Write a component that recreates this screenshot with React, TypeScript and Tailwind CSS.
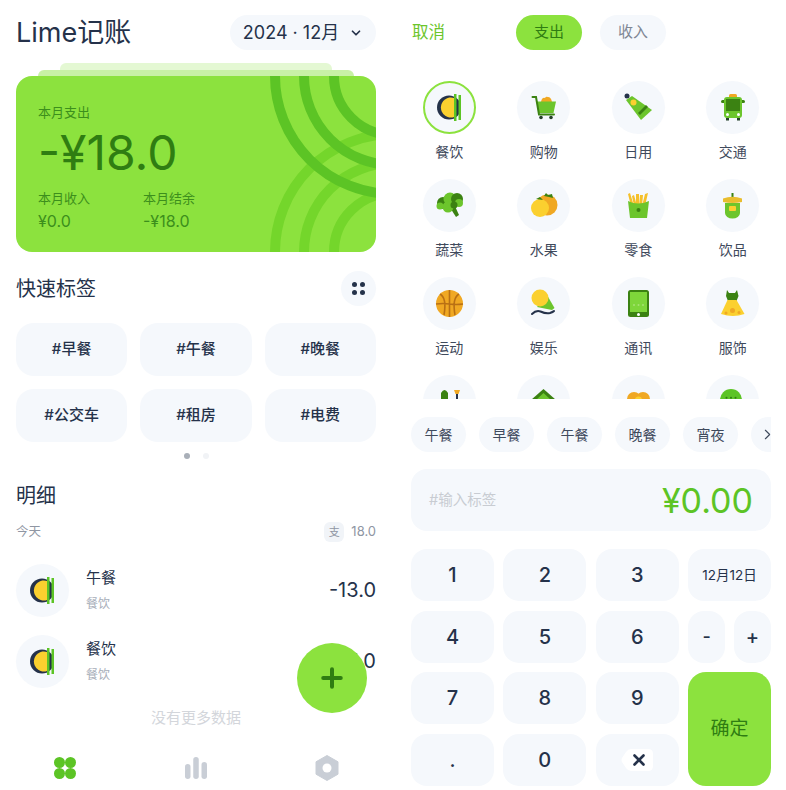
import React from 'react';
import { ChevronDown, ChevronRight, Plus } from 'lucide-react';

const G = '#6cc52c';
const D = '#3b8212';
const Y = '#fbd02f';
const O = '#f0a823';

const Burger = () => (
  <>
    <circle cx="26" cy="26.500" r="12" fill="#25324a" />
    <path d="M31 17 A10 10 0 1 0 31 36 Z" fill={Y} />
    <path d="M31 13 h2.500 v27 h-2.500 Z M35.500 14 h2.500 v25 h-2.500 Z" fill="#5cc425" />
  </>
);

const Cart = () => (
  <>
    <path d="M24 21 q1 -5 4 -4 q1 -2 3 -1 q3 0 4 5 Z" fill={O} />
    <path d="M20 20.500 H39 L36.500 32 H22 Z" fill={G} />
    <path d="M15.500 16 H19 L22 33.500 H37" fill="none" stroke={D} strokeWidth="2" strokeLinecap="round" />
    <circle cx="24" cy="36.500" r="1.800" fill="#25402a" />
    <circle cx="34" cy="36.500" r="1.800" fill="#25402a" />
  </>
);

const Tube = () => (
  <>
    <circle cx="15" cy="15" r="2.500" fill="#25324a" />
    <path d="M14 19 L20 15 L40 29 L29 39 Z" fill={G} />
    <path d="M26 32 L34 24 L36 26 L28 34 Z" fill={D} />
    <circle cx="21.500" cy="21.500" r="3" fill={Y} />
  </>
);

const Bus = () => (
  <>
    <rect x="23" y="13" width="8" height="4" rx="1.500" fill={O} />
    <rect x="15" y="19" width="24" height="3" rx="1.500" fill={D} />
    <rect x="18" y="16" width="18" height="21" rx="3" fill={G} />
    <rect x="20" y="18" width="14" height="12" fill={D} />
    <circle cx="21.500" cy="33.500" r="1.500" fill="#fff" />
    <circle cx="32.500" cy="33.500" r="1.500" fill="#fff" />
    <rect x="20" y="37" width="3" height="2.500" fill="#25402a" />
    <rect x="31" y="37" width="3" height="2.500" fill="#25402a" />
  </>
);

const Broccoli = () => (
  <>
    <path d="M26 27 L33 38 L36 36 L31 25 Z" fill={D} />
    <circle cx="20" cy="24" r="6" fill={D} />
    <circle cx="27" cy="20" r="6.500" fill={G} />
    <circle cx="34" cy="20" r="6" fill={D} />
    <circle cx="25" cy="28" r="5.500" fill={G} />
    <circle cx="36" cy="24" r="4" fill={G} />
    <circle cx="17" cy="27" r="3.500" fill={G} />
    <circle cx="31" cy="26" r="3.500" fill={D} />
  </>
);

const Fruit = () => (
  <>
    <circle cx="30" cy="26" r="10.500" fill={O} />
    <path d="M27 17 l2 -3 l2 2 l4 -1 l1 4 l-4 -1 Z" fill={D} />
    <circle cx="23" cy="29" r="9" fill={Y} />
    <path d="M19 20 l4 -2 l3 3 Z" fill={D} />
  </>
);

const Fries = () => (
  <>
    <path d="M16 15 l2 -1 l4 13 h-3 Z M20 17 l2 -1 l3 11 h-3 Z M24 15 h3 v12 h-3 Z M28 16 l3 0 l-1 11 h-3 Z M33 15 l3 -1 l-3 13 h-3 Z" fill="#f5c02a" />
    <path d="M16 22 q10 5 21 0 L35 39 H18 Z" fill={G} />
    <circle cx="26.500" cy="31" r="2" fill={D} />
  </>
);

const Drink = () => (
  <>
    <rect x="25.500" y="14" width="2" height="6" fill={D} />
    <path d="M19 24 H34 V34 A7.500 5.500 0 0 1 19 34 Z" fill={G} />
    <path d="M17 19.500 Q26.500 16 36 19.500 V23 Q26.500 25 17 23 Z" fill="#e9bd2e" />
    <rect x="23" y="27" width="7" height="5" rx="1" fill={Y} />
  </>
);

const Ball = () => (
  <>
    <circle cx="26.500" cy="26.500" r="13.500" fill={O} />
    <path d="M26.500 13 V40 M13 27 Q20 26 26.500 27 T40 27 M17 17 Q24 21 21 38 M36 17 Q29 21 32 38" fill="none" stroke="#b97014" strokeWidth="1.600" />
  </>
);

const Mic = () => (
  <>
    <path d="M20 30 L30 18 L37.500 31 L35 33 Z" fill={G} />
    <circle cx="23" cy="21" r="8.500" fill={Y} />
    <path d="M15 37 Q19 33 23.500 34.500 Q29 37 33 36 Q36 35 37 34" fill="none" stroke="#25324a" strokeWidth="2" strokeLinecap="round" />
  </>
);

const Tablet = () => (
  <>
    <rect x="16" y="13" width="21" height="27" rx="2.500" fill={D} />
    <rect x="18" y="15" width="17" height="20" fill="#7ed63a" />
    <circle cx="26.500" cy="37.500" r="1.500" fill="#fff" />
    <circle cx="22" cy="28" r="1" fill="#a6e272" />
    <circle cx="26.500" cy="28" r="1" fill="#a6e272" />
    <circle cx="31" cy="28" r="1" fill="#a6e272" />
  </>
);

const Dress = () => (
  <>
    <path d="M21 13 l2 3 h6 l2 -3 l1.500 6 l-2 5 h-8.500 l-2 -5 Z" fill={D} />
    <path d="M21.500 23 H30.500 L38.500 37 Q27 41 15 37 Z" fill={Y} />
    <circle cx="26.500" cy="33.500" r="2.500" fill={O} />
    <circle cx="20" cy="36" r="1.500" fill={O} />
    <circle cx="33" cy="35.500" r="1.500" fill={O} />
  </>
);

const Lipstick = () => (
  <>
    <path d="M18 18 q3.500 -6 7 0 V30 H18 Z" fill={D} />
    <path d="M31 15 h6 l-1.500 4 h-3 Z" fill={O} />
    <rect x="33" y="19" width="2" height="8" fill="#25324a" />
  </>
);

const House = () => (
  <>
    <path d="M26.500 14 L39 25 H14 Z" fill={D} />
    <path d="M26.500 18 L34 25 H19 Z" fill={G} />
  </>
);

const Gift = () => (
  <>
    <circle cx="22" cy="24" r="7" fill={O} />
    <circle cx="31" cy="24" r="7" fill={O} />
    <circle cx="26.500" cy="25" r="3.500" fill={Y} />
  </>
);

const More = () => (
  <>
    <circle cx="25" cy="25" r="11" fill="#5cc425" />
    <circle cx="20.500" cy="22.800" r="1" fill="#2f7d12" />
    <circle cx="25" cy="22.800" r="1" fill="#2f7d12" />
    <circle cx="29.500" cy="22.800" r="1" fill="#2f7d12" />
  </>
);

const cats: [string, React.FC][] = [
  ['餐饮', Burger], ['购物', Cart], ['日用', Tube], ['交通', Bus],
  ['蔬菜', Broccoli], ['水果', Fruit], ['零食', Fries], ['饮品', Drink],
  ['运动', Ball], ['娱乐', Mic], ['通讯', Tablet], ['服饰', Dress],
  ['', Lipstick], ['', House], ['', Gift], ['', More],
];

const IconCircle = ({ icon: Icon, active }: { icon: React.FC; active?: boolean }) => (
  <div className={`w-[53px] h-[53px] rounded-full bg-[#f5f8fc] ${active ? 'border-2 border-[#8ce23e]' : ''} flex items-center justify-center`}>
    <svg width="53" height="53" viewBox="0 0 53 53" className="shrink-0">
      <Icon />
    </svg>
  </div>
);

const Row = ({ title, amount }: { title: string; amount: string }) => (
  <div className="flex items-center h-[52px]">
    <IconCircle icon={Burger} />
    <div className="ml-[17px] flex flex-col">
      <span className="text-[15px] leading-[20px] text-[#25324a]">{title}</span>
      <span className="mt-[8px] text-[12px] leading-[16px] text-[#a7aeb9]">餐饮</span>
    </div>
    <span className="ml-auto text-[20px] text-[#25324a]">{amount}</span>
  </div>
);

const Key = ({ children }: { children: React.ReactNode }) => (
  <div className="h-[52px] rounded-[16px] bg-[#f5f8fc] flex items-center justify-center text-[20px] font-medium text-[#25324a]">
    {children}
  </div>
);

const HomePanel = () => (
  <div className="relative w-[392px] h-[790px] shrink-0 px-4 flex flex-col">
    <div className="flex items-center justify-between pt-[15px]">
      <span className="text-[27px] leading-[35px] text-[#25324a]">Lime记账</span>
      <div className="h-[35px] w-[146px] rounded-full bg-[#f5f8fc] flex items-center justify-center gap-[10px] text-[18px] text-[#25324a]">
        <span>2024 · 12月</span>
        <ChevronDown size={14} strokeWidth={3} />
      </div>
    </div>

    <div className="mt-[13px] mx-[44px] h-[7px] rounded-t-[6px] bg-[#e4f8d3]" />
    <div className="mx-[22px] h-[6px] rounded-t-[6px] bg-[#c8f1a6]" />
    <div className="relative h-[176px] rounded-[16px] bg-[#8ce23e] overflow-hidden px-[22px] pt-[28px]">
      <svg className="absolute inset-0" width="360" height="176" viewBox="0 0 360 176" fill="none" strokeWidth="10">
        <g stroke="#74d62b">
          <circle cx="377" cy="176" r="118" />
          <circle cx="377" cy="176" r="89" />
          <circle cx="377" cy="176" r="59" />
        </g>
        <g stroke="#5cc425">
          <circle cx="377" cy="0" r="118" />
          <circle cx="377" cy="0" r="89" />
          <circle cx="377" cy="0" r="59" />
        </g>
      </svg>
      <div className="relative">
        <div className="text-[13px] leading-[16px] text-[#3c8f1c]">本月支出</div>
        <div className="mt-[5px] text-[48px] leading-[56px] text-[#2f7d12]">-¥18.0</div>
        <div className="mt-[9px] flex">
          <div className="w-[105px]">
            <div className="text-[13px] leading-[16px] text-[#3c8f1c]">本月收入</div>
            <div className="mt-[5px] text-[16px] leading-[20px] text-[#3c8f1c]">¥0.0</div>
          </div>
          <div>
            <div className="text-[13px] leading-[16px] text-[#3c8f1c]">本月结余</div>
            <div className="mt-[5px] text-[16px] leading-[20px] text-[#3c8f1c]">-¥18.0</div>
          </div>
        </div>
      </div>
    </div>

    <div className="mt-[19px] flex items-center justify-between">
      <span className="text-[20px] text-[#25324a]">快速标签</span>
      <div className="w-[35px] h-[35px] rounded-full bg-[#f5f8fc] grid grid-cols-2 place-items-center p-[9px]">
        {[0, 1, 2, 3].map((i) => (
          <span key={i} className="w-[5px] h-[5px] rounded-full bg-[#25324a]" />
        ))}
      </div>
    </div>

    <div className="mt-[17px] grid grid-cols-3 gap-[13px]">
      {['#早餐', '#午餐', '#晚餐', '#公交车', '#租房', '#电费'].map((t) => (
        <div key={t} className="h-[53px] rounded-[18px] bg-[#f5f8fc] flex items-center justify-center text-[15px] font-medium text-[#25324a]">
          {t}
        </div>
      ))}
    </div>

    <div className="mt-[11px] flex justify-center gap-[13px]">
      <span className="w-[6px] h-[6px] rounded-full bg-[#a9afb8]" />
      <span className="w-[6px] h-[6px] rounded-full bg-[#f1f3f6]" />
    </div>

    <div className="mt-[23px] text-[20px] leading-[28px] text-[#25324a]">明细</div>

    <div className="mt-[12px] flex items-center h-[20px]">
      <span className="text-[12.500px] text-[#8f96a3]">今天</span>
      <span className="ml-auto w-[20px] h-[20px] rounded-[6px] bg-[#f1f4f8] flex items-center justify-center text-[11px] text-[#8f96a3]">支</span>
      <span className="ml-[7px] text-[13px] text-[#8f96a3]">18.0</span>
    </div>

    <div className="mt-[22px] flex flex-col gap-[19px]">
      <Row title="午餐" amount="-13.0" />
      <Row title="餐饮" amount="-5.0" />
    </div>

    <div className="mt-[21px] text-center text-[15px] leading-[20px] text-[#d3d6db]">没有更多数据</div>

    <div className="mt-[27px] -mx-4 grid grid-cols-3 place-items-center">
      <svg width="24" height="24" viewBox="0 0 24 24" fill="#5cc425">
        <circle cx="6.500" cy="6.500" r="5.500" />
        <circle cx="17.500" cy="6.500" r="5.500" />
        <circle cx="6.500" cy="17.500" r="5.500" />
        <circle cx="17.500" cy="17.500" r="5.500" />
      </svg>
      <svg width="24" height="24" viewBox="0 0 24 24" fill="#c9ced6">
        <rect x="1" y="8" width="5.500" height="15" rx="2.750" />
        <rect x="9.250" y="1" width="5.500" height="22" rx="2.750" />
        <rect x="17.500" y="6" width="5.500" height="17" rx="2.750" />
      </svg>
      <svg width="26" height="26" viewBox="0 0 26 26">
        <path d="M13 0.500 L24 6.800 V19.200 L13 25.500 L2 19.200 V6.800 Z" fill="#c9ced6" stroke="#c9ced6" strokeLinejoin="round" />
        <circle cx="13" cy="13" r="4.500" fill="#fff" />
      </svg>
    </div>

    <div className="absolute left-[297px] top-[643px] w-[70px] h-[70px] rounded-full bg-[#8ce23e] flex items-center justify-center text-[#2f7d12]">
      <Plus size={30} strokeWidth={3.2} />
    </div>
  </div>
);

const EntryPanel = () => (
  <div className="w-[394px] h-[790px] shrink-0 flex flex-col">
    <div className="flex items-center pt-[15px] pl-[20px]">
      <span className="w-[104px] text-[16.500px] text-[#6cc52c]">取消</span>
      <div className="h-[35px] w-[66px] rounded-full bg-[#8ce23e] flex items-center justify-center text-[15px] text-[#2f7d12]">支出</div>
      <div className="ml-[18px] h-[35px] w-[66px] rounded-full bg-[#f5f8fc] flex items-center justify-center text-[15px] text-[#7f8794]">收入</div>
    </div>

    <div className="mt-[31px] ml-[10px] w-[378px] h-[318px] overflow-hidden grid grid-cols-4 auto-rows-[98px]">
      {cats.map(([name, Icon], i) => (
        <div key={i} className="flex flex-col items-center">
          <IconCircle icon={Icon} active={i === 0} />
          {name && <span className="mt-[8px] text-[14px] leading-[20px] text-[#3f4a5c]">{name}</span>}
        </div>
      ))}
    </div>

    <div className="mt-[18px] ml-[19px] w-[360px] overflow-hidden flex gap-[13px]">
      {['午餐', '早餐', '午餐', '晚餐', '宵夜'].map((t, i) => (
        <div key={i} className="w-[55px] h-[35px] shrink-0 rounded-full bg-[#f5f8fc] flex items-center justify-center text-[14px] text-[#3f4a5c]">
          {t}
        </div>
      ))}
      <div className="w-[55px] h-[35px] shrink-0 rounded-full bg-[#f5f8fc] flex items-center pl-[8px] text-[#3f4a5c]">
        <ChevronRight size={17} strokeWidth={1.6} />
      </div>
    </div>

    <div className="mt-[17px] ml-[19px] w-[360px] h-[62px] rounded-[16px] bg-[#f5f8fc] flex items-center justify-between px-[18px]">
      <span className="text-[14.500px] text-[#c8ccd2]">#输入标签</span>
      <span className="text-[34px] text-[#5cc425]">¥0.00</span>
    </div>

    <div className="mt-[18px] ml-[19px] w-[360px] grid grid-cols-4 gap-[9.500px] auto-rows-[52px]">
      <Key>1</Key>
      <Key>2</Key>
      <Key>3</Key>
      <Key><span className="text-[13.500px] font-normal">12月12日</span></Key>
      <Key>4</Key>
      <Key>5</Key>
      <Key>6</Key>
      <div className="flex justify-between">
        <div className="w-[37px] rounded-[16px] bg-[#f5f8fc] flex items-center justify-center text-[18px] font-medium text-[#25324a]">-</div>
        <div className="w-[37px] rounded-[16px] bg-[#f5f8fc] flex items-center justify-center text-[20px] font-medium text-[#25324a]">+</div>
      </div>
      <Key>7</Key>
      <Key>8</Key>
      <Key>9</Key>
      <div className="row-span-2 rounded-[18px] bg-[#8ce23e] flex items-center justify-center text-[19px] text-[#2f7d12]">确定</div>
      <Key>.</Key>
      <Key>0</Key>
      <Key>
        <svg width="32" height="24" viewBox="0 0 32 24">
          <path d="M10 1 H27 Q32 1 32 6 V18 Q32 23 27 23 H10 Q7 23 5 20 L1 14 Q0 12 1 10 L5 4 Q7 1 10 1 Z" fill="#fff" />
          <path d="M13.500 7.500 L22.500 16.500 M22.500 7.500 L13.500 16.500" stroke="#25324a" strokeWidth="2.600" strokeLinecap="round" />
        </svg>
      </Key>
    </div>
  </div>
);

export default function App() {
  return (
    <div className="w-[786px] h-[790px] overflow-hidden bg-white flex font-['Inter','Noto_Sans_CJK_SC',sans-serif]">
      <HomePanel />
      <EntryPanel />
    </div>
  );
}
